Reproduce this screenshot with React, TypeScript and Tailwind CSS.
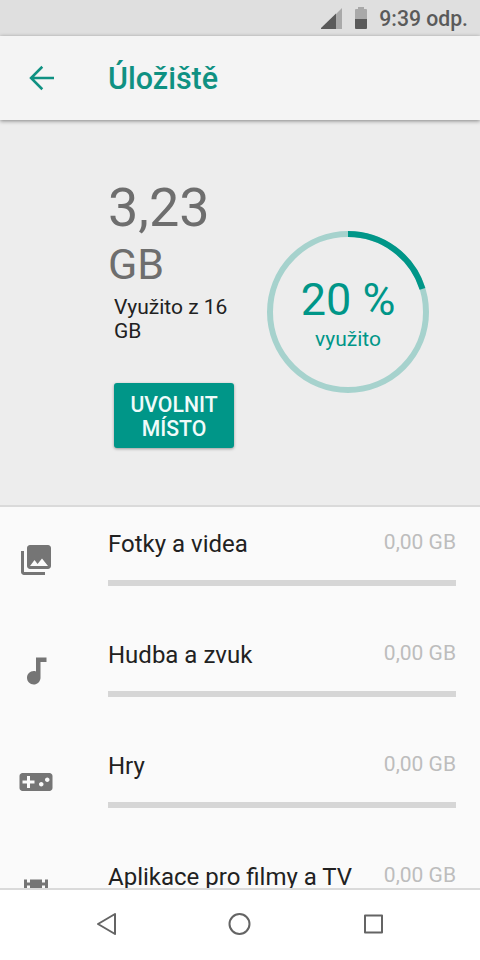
const categories = [
  {
    name: "Fotky a videa",
    size: "0,00 GB",
    icon: "M22 16V4c0-1.1-.9-2-2-2H8c-1.1 0-2 .9-2 2v12c0 1.1.9 2 2 2h12c1.1 0 2-.9 2-2zm-11-4l2.03 2.71L16 11l4 5H8l3-4zM2 6v14c0 1.1.9 2 2 2h14v-2H4V6H2z",
  },
  {
    name: "Hudba a zvuk",
    size: "0,00 GB",
    icon: "M12 3v9.28c-.47-.17-.97-.28-1.5-.28C8.01 12 6 14.01 6 16.5S8.01 21 10.5 21c2.31 0 4.2-1.75 4.45-4H15V6h4V3h-7z",
  },
  {
    name: "Hry",
    size: "0,00 GB",
    icon: "M21 6H3c-1.1 0-2 .9-2 2v8c0 1.1.9 2 2 2h18c1.1 0 2-.9 2-2V8c0-1.1-.9-2-2-2zm-10 7H8v3H6v-3H3v-2h3V8h2v3h3v2zm4.5 2c-.83 0-1.5-.67-1.5-1.5s.67-1.5 1.5-1.5 1.5.67 1.5 1.5-.67 1.5-1.5 1.5zm4-3c-.83 0-1.5-.67-1.5-1.5S18.67 9 19.5 9s1.5.67 1.5 1.5-.67 1.5-1.5 1.5z",
  },
  {
    name: "Aplikace pro filmy a TV",
    size: "0,00 GB",
    icon: "M18 3v2h-2V3H8v2H6V3H4v18h2v-2h2v2h8v-2h2v2h2V3h-2zM8 17H6v-2h2v2zm0-4H6v-2h2v2zm0-4H6V7h2v2zm10 8h-2v-2h2v2zm0-4h-2v-2h2v2zm0-4h-2V7h2v2z",
  },
];

function StatusBar() {
  return (
    <div className="flex h-9 shrink-0 items-center justify-end bg-[#dfdfdf] pr-3 text-[#5a5a5a]">
      <svg width="22" height="22" viewBox="0 0 22 22" className="mt-px mr-3">
        <path d="M21 0v21H15V6z" fill="#a9a9a9" />
        <path d="M15 5.5v15.5H0V20z" fill="#5a5a5a" />
      </svg>
      <svg width="12" height="22" viewBox="0 0 12 22" className="mr-3 -mt-px">
        <path d="M3 0h6v2h2q1 0 1 1v9H0V3q0-1 1-1h2z" fill="#a9a9a9" />
        <path d="M0 12h12v9q0 1-1 1H1q-1 0-1-1z" fill="#5a5a5a" />
      </svg>
      <span className="mt-0.5 text-[21.2px] leading-6 font-medium">9:39 odp.</span>
    </div>
  );
}

function AppBar() {
  return (
    <header className="z-10 flex h-[84px] shrink-0 items-center bg-[#f4f4f4] pl-6 text-[#0f9182] shadow-[0_1px_4px_rgba(0,0,0,0.45)]">
      <svg width="36" height="36" viewBox="0 0 24 24" fill="none" stroke="currentColor" strokeWidth="1.7">
        <path d="M20 12H5M12.2 4.5L4.7 12l7.5 7.5" />
      </svg>
      <h1 className="mt-0.5 ml-12 text-[30.5px] leading-9 font-medium">Úložiště</h1>
    </header>
  );
}

function UsageRing({ percent }: { percent: number }) {
  return (
    <div className="relative mt-[111px] ml-[33px] size-[162px] shrink-0 text-[#009688]">
      <svg width="162" height="162" viewBox="0 0 162 162" fill="none" strokeWidth="6">
        <circle cx="81" cy="81" r="78" stroke="#a6d2cd" />
        <circle
          cx="81"
          cy="81"
          r="78"
          stroke="currentColor"
          pathLength="100"
          strokeDasharray={`${percent} 100`}
          transform="rotate(-90 81 81)"
        />
      </svg>
      <div className="absolute inset-0 flex flex-col items-center pt-[42px]">
        <span className="text-[45px] leading-[53px]">20 %</span>
        <span className="mt-px text-[21px] leading-[25px]">využito</span>
      </div>
    </div>
  );
}

function Summary() {
  return (
    <section className="flex h-[387px] shrink-0 border-b-2 border-[#dadada] bg-[#ededed] pl-[108px]">
      <div className="w-[126px] pt-14">
        <div className="text-[54px] leading-[64px] text-[#6e6e6e]">3,23</div>
        <div className="text-[43px] leading-[49px] text-[#6e6e6e]">GB</div>
        <div className="mt-1.5 ml-1.5 text-[21px] leading-6 text-[#212121]">
          Využito z 16 GB
        </div>
        <button className="mt-10 ml-1.5 h-[65px] w-[120px] rounded-[3px] bg-[#009688] px-3 pt-0.5 text-[21.2px] leading-6 font-medium text-[#f0fbfa] shadow-[0_1px_3px_rgba(0,0,0,0.35)]">
          UVOLNIT MÍSTO
        </button>
      </div>
      <UsageRing percent={20.2} />
    </section>
  );
}

function NavBar() {
  return (
    <nav className="flex h-[72px] shrink-0 items-center justify-between border-t-2 border-[#dadada] bg-white px-[94px] pb-0.5">
      <svg width="24" height="26" viewBox="0 0 24 26" fill="none" stroke="#646464" strokeWidth="2" strokeLinejoin="round">
        <path d="M21 3L4 13L21 23Z" />
      </svg>
      <svg width="24" height="24" viewBox="0 0 24 24" fill="none" stroke="#646464" strokeWidth="2">
        <circle cx="11.5" cy="12" r="10" />
      </svg>
      <svg width="24" height="24" viewBox="0 0 24 24" fill="none" stroke="#646464" strokeWidth="2" strokeLinejoin="round">
        <path d="M3 3.5h17v17H3z" />
      </svg>
    </nav>
  );
}

export default function App() {
  return (
    <div className="flex h-[960px] w-[480px] flex-col overflow-hidden bg-[#fafafa] font-[Roboto,sans-serif]">
      <StatusBar />
      <AppBar />
      <Summary />
      <main className="min-h-0 flex-1 overflow-hidden">
        {categories.map((item) => (
          <div key={item.name} className="flex h-[111px] pr-6 pl-[18px]">
            <svg width="36" height="36" viewBox="0 0 24 24" fill="#757575" className="mt-[35px] shrink-0">
              <path d={item.icon} />
            </svg>
            <div className="ml-[54px] flex-1 pt-[22px]">
              <div className="flex justify-between">
                <span className="text-2xl leading-[30px] text-[#212121]">{item.name}</span>
                <span className="text-[21px] leading-[26px] text-[#bdbdbd]">{item.size}</span>
              </div>
              <div className="mt-[21px] h-1.5 bg-[#d6d6d6]" />
            </div>
          </div>
        ))}
      </main>
      <NavBar />
    </div>
  );
}
